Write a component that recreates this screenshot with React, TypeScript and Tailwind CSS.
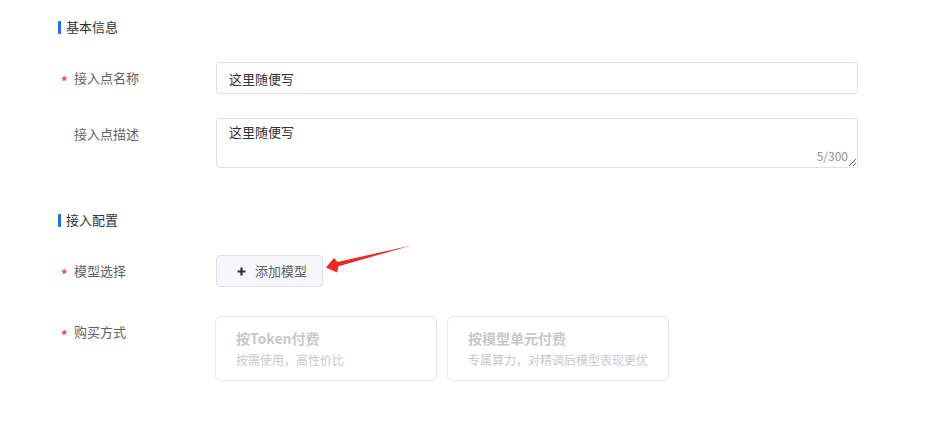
const font = { fontFamily: '"Noto Sans CJK SC", "Noto Sans", sans-serif' }

function SectionTitle({ title }: { title: string }) {
  return (
    <div className="flex items-center h-5">
      <span className="w-[3px] h-[13px] bg-[#1f6bff] rounded-[1px]" />
      <span className="ml-[5px] text-[13px] text-[#303133]">{title}</span>
    </div>
  )
}

function Label({ text, required }: { text: string; required?: boolean }) {
  return (
    <div className="w-[158px] shrink-0 h-8 flex items-center text-[13px] text-[#606266]">
      <span className="w-4 pl-[3px] relative top-[3px] text-[#e5484d] text-[13px] font-bold">
        {required ? "*" : ""}
      </span>
      <span>{text}</span>
    </div>
  )
}

// purchase options
const payOptions = [
  { title: "按Token付费", desc: "按需使用，高性价比" },
  { title: "按模型单元付费", desc: "专属算力，对精调后模型表现更优" },
]

export default function App() {
  return (
    <div className="relative w-[929px] h-[438px] bg-white pl-[58px] pt-[17px]" style={font}>
      <SectionTitle title="基本信息" />

      <div className="flex mt-[25px]">
        <Label text="接入点名称" required />
        <input
          defaultValue="这里随便写"
          className="w-[642px] h-8 px-3 border border-[#dcdfe6] rounded text-[13px] text-[#303133] outline-none"
        />
      </div>

      <div className="flex mt-6">
        <Label text="接入点描述" />
        <div className="relative w-[642px] h-[50px]">
          <textarea
            defaultValue="这里随便写"
            className="block w-full h-full px-3 pt-[3px] border border-[#dcdfe6] rounded text-[13px] text-[#303133] outline-none resize-y"
          />
          <span className="absolute right-[10px] bottom-[4px] text-[12px] text-[#909399] leading-4">5/300</span>
        </div>
      </div>

      <div className="mt-[42px]">
        <SectionTitle title="接入配置" />
      </div>

      <div className="flex mt-[25px]">
        <Label text="模型选择" required />
        <button className="h-8 w-[107px] flex items-center pl-[20px] border border-[#dcdfe6] bg-[#f5f7fa] rounded text-[13px] text-[#606266]">
          <svg width="9" height="9" viewBox="0 0 9 9">
            <path d="M4.5 0.5v8M0.5 4.5h8" stroke="#303133" strokeWidth="2.2" />
          </svg>
          <span className="ml-[9px]">添加模型</span>
        </button>
      </div>

      <div className="flex mt-[29px]">
        <Label text="购买方式" required />
        <div className="flex gap-[10px] -ml-px">
          {payOptions.map((opt) => (
            <div
              key={opt.title}
              className="w-[222px] h-[65px] border border-[#e4e7ed] rounded-md pl-5 pt-[11px]"
            >
              <div className="text-[14px] font-bold text-[#c6c8cc] leading-5">{opt.title}</div>
              <div className="mt-[2px] text-[12px] text-[#c8c9cc] leading-5">{opt.desc}</div>
            </div>
          ))}
        </div>
      </div>

      {/* red annotation arrow */}
      <svg className="absolute left-0 top-0 pointer-events-none" width="929" height="438">
        <polygon
          points="326,267.5 334,258 337.5,262 411,245.5 338.5,266.3 337,272.5"
          fill="#ee2a1e"
        />
      </svg>
    </div>
  )
}
